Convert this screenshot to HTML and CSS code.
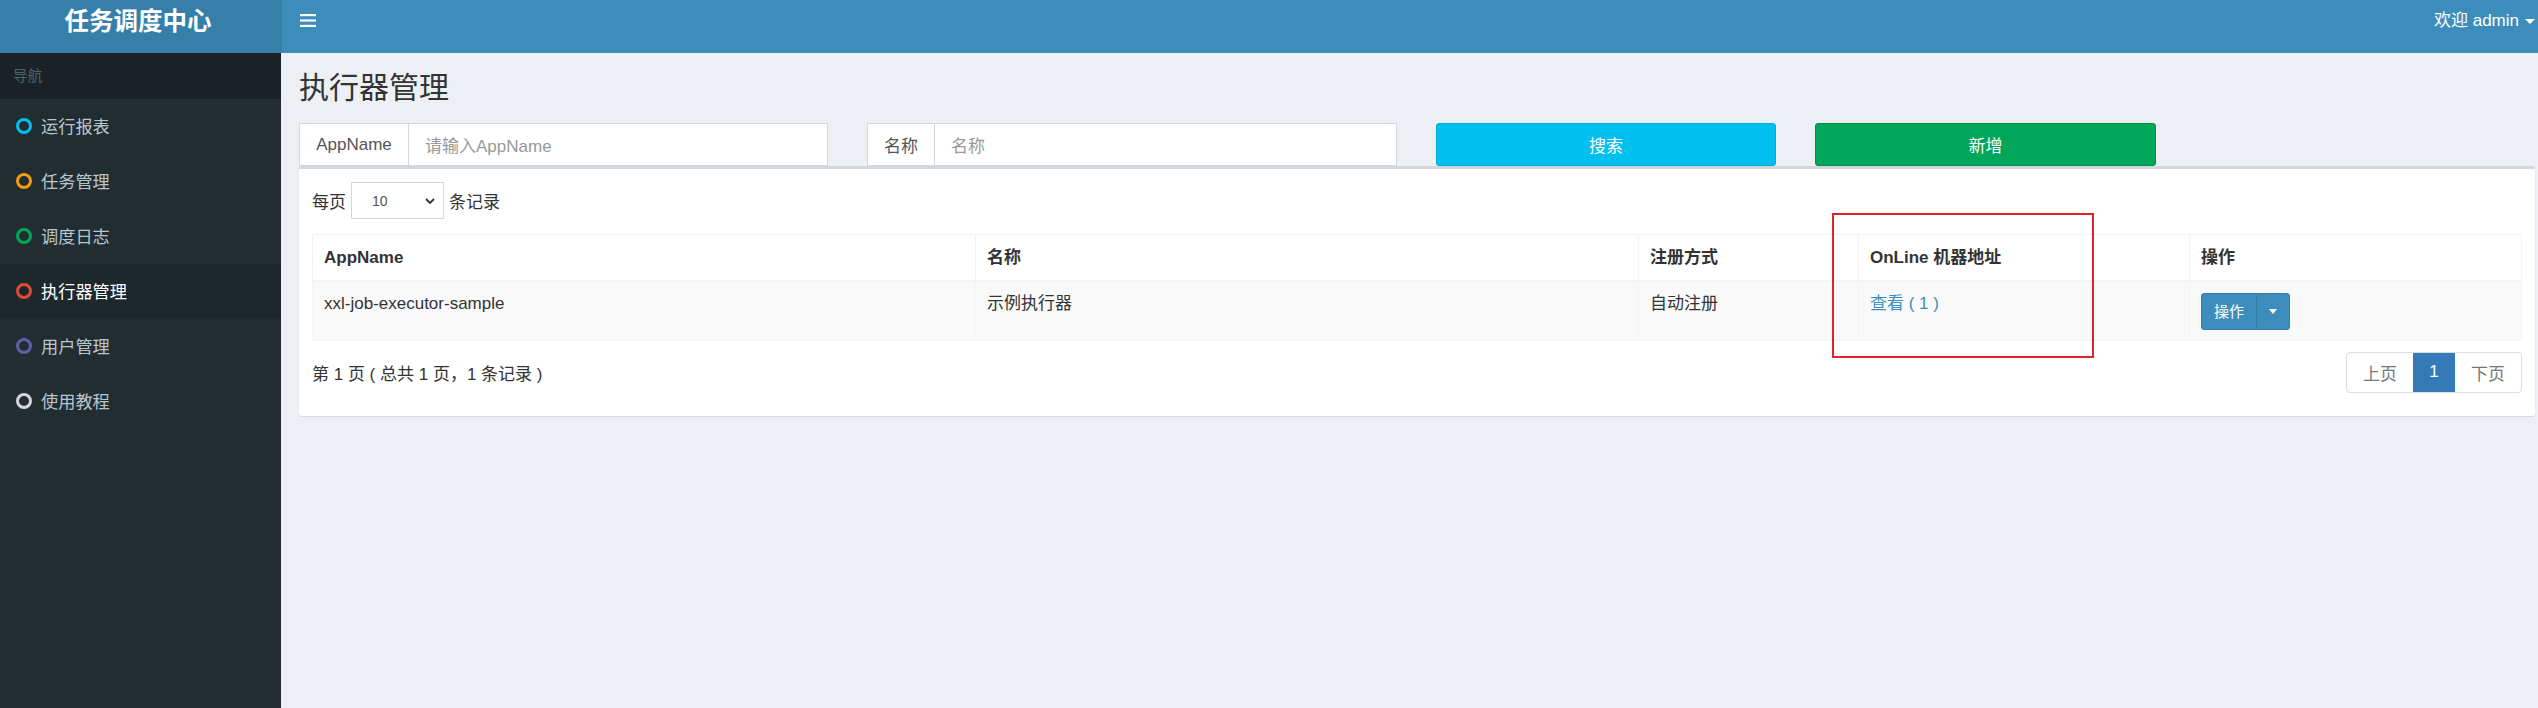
FILE: index.html
```html
<!DOCTYPE html>
<html lang="zh-CN">
<head>
<meta charset="utf-8">
<title>执行器管理</title>
<link rel="stylesheet" href="styles.css">
</head>
<body>
<div class="page">
  <header class="topbar">
    <div class="logo">任务调度中心</div>
    <div class="navbar">
      <span class="toggle">
        <svg width="16" height="14" viewBox="0 0 16 14"><rect x="0" y="0" width="16" height="2.2" fill="#fff"/><rect x="0" y="5.4" width="16" height="2.2" fill="#fff"/><rect x="0" y="10.8" width="16" height="2.2" fill="#fff"/></svg>
      </span>
      <span class="user">欢迎 admin <span class="caret"></span></span>
    </div>
  </header>
  <div class="main">
    <aside class="sidebar">
      <div class="nav-header">导航</div>
      <ul class="menu">
        <li class="item"><span class="ring ring-aqua"></span>运行报表</li>
        <li class="item"><span class="ring ring-yellow"></span>任务管理</li>
        <li class="item"><span class="ring ring-green"></span>调度日志</li>
        <li class="item active"><span class="ring ring-red"></span>执行器管理</li>
        <li class="item"><span class="ring ring-purple"></span>用户管理</li>
        <li class="item"><span class="ring ring-gray"></span>使用教程</li>
      </ul>
    </aside>
    <section class="content">
      <h1 class="title">执行器管理</h1>
      <div class="search-row">
        <div class="input-group">
          <span class="addon addon-app">AppName</span>
          <span class="field placeholder">请输入AppName</span>
        </div>
        <div class="input-group">
          <span class="addon addon-name">名称</span>
          <span class="field placeholder">名称</span>
        </div>
        <button class="btn btn-info">搜索</button>
        <button class="btn btn-success">新增</button>
      </div>
      <div class="box">
        <div class="length-row">
          <span>每页</span>
          <span class="select"><span>10</span>
            <svg width="10" height="6" viewBox="0 0 10 6"><path d="M1 1 L5 5 L9 1" fill="none" stroke="#333" stroke-width="1.8"/></svg>
          </span>
          <span>条记录</span>
        </div>
        <table class="grid">
          <colgroup>
            <col class="c1"><col class="c2"><col class="c3"><col class="c4"><col class="c5">
          </colgroup>
          <thead>
            <tr><th>AppName</th><th>名称</th><th>注册方式</th><th>OnLine 机器地址</th><th>操作</th></tr>
          </thead>
          <tbody>
            <tr>
              <td>xxl-job-executor-sample</td>
              <td>示例执行器</td>
              <td>自动注册</td>
              <td><a class="link">查看 ( 1 )</a></td>
              <td>
                <span class="btn-group">
                  <span class="op-main">操作</span>
                  <span class="op-caret"><span class="caret small"></span></span>
                </span>
              </td>
            </tr>
          </tbody>
        </table>
        <div class="footer-row">
          <span class="info">第 1 页 ( 总共 1 页，1 条记录 )</span>
          <ul class="pagination">
            <li class="pg">上页</li>
            <li class="pg current">1</li>
            <li class="pg">下页</li>
          </ul>
        </div>
      </div>
    </section>
  </div>
  <div class="annotation"></div>
</div>
</body>
</html>
```

FILE: styles.css
```css
* { box-sizing: border-box; }
html, body { margin: 0; padding: 0; }
body {
  font-family: "Liberation Sans", "Noto Sans CJK SC", sans-serif;
  font-size: 17px;
  color: #333;
  background: #ecf0f5;
}
.page { position: relative; width: 2538px; height: 708px; overflow: hidden; }

.topbar { display: flex; height: 53px; }
.logo {
  width: 282px; background: #367fa9; color: #fff;
  font-weight: bold; font-size: 24.5px; line-height: 43px;
  text-align: center; padding-right: 6px;
}
.navbar {
  flex: 1; background: #3c8dbc; display: flex;
  justify-content: space-between; align-items: flex-start;
  padding: 0 3px 0 18px;
}
.toggle { display: flex; padding-top: 14px; }
.user { color: #fff; font-size: 17px; line-height: 42px; display: flex; align-items: center; }
.caret {
  display: inline-block; width: 0; height: 0; margin-left: 6px;
  border-left: 5.5px solid transparent; border-right: 5.5px solid transparent;
  border-top: 5.5px solid #fff;
}
.caret.small { margin-left: 0; border-left-width: 4px; border-right-width: 4px; border-top-width: 5px; }

.main { display: flex; height: 655px; }
.sidebar { width: 282px; background: #222d32; }
.nav-header {
  height: 46px; line-height: 46px; background: #1a2226;
  color: #4b646f; font-size: 14.7px; padding-left: 13px;
}
.menu { list-style: none; margin: 0; padding: 0; }
.item {
  height: 55px; display: flex; align-items: center;
  padding: 0 0 2px 16px; color: #b8c7ce; font-size: 17.2px;
}
.item.active { background: #1e282c; color: #fff; }
.ring {
  width: 16px; height: 16px; border-radius: 50%;
  border: 3px solid #ccc; margin-right: 9px; flex: none;
}
.ring-aqua { border-color: #00c0ef; }
.ring-yellow { border-color: #f39c12; }
.ring-green { border-color: #00a65a; }
.ring-red { border-color: #dd4b39; }
.ring-purple { border-color: #605ca8; }
.ring-gray { border-color: #d2d6de; }

.content { flex: 1; padding: 17px 3px 0 18px; }
.title {
  margin: 0 0 17px; font-weight: normal; font-size: 30px;
  line-height: 36px; color: #333;
}
.search-row {
  display: grid; grid-template-columns: 529px 530px 340px 341px;
  column-gap: 39px; height: 43px;
}
.input-group { display: flex; border: 1px solid #d2d6de; background: #fff; }
.addon {
  display: flex; align-items: center; justify-content: center;
  color: #555; border-right: 1px solid #d2d6de; flex: none;
}
.addon-app { width: 109px; }
.addon-name { width: 67px; }
.field { flex: 1; display: flex; align-items: center; padding-left: 16px; }
.placeholder { color: #999; }
.btn {
  font-family: inherit; font-size: 17px; color: #fff;
  border-radius: 3px; border: 1px solid; cursor: pointer; height: 43px;
}
.btn-info { background: #00c0ef; border-color: #00acd6; }
.btn-success { background: #00a65a; border-color: #008d4c; }

.box {
  background: #fff; border-top: 3px solid #d2d6de; border-radius: 3px;
  box-shadow: 0 1px 1px rgba(0,0,0,0.1);
  padding: 13px 13px 23px;
}
.length-row { display: flex; align-items: center; height: 37px; gap: 5px; }
.select {
  width: 93px; height: 37px; border: 1px solid #d2d6de;
  display: flex; align-items: center; justify-content: space-between;
  padding: 0 8px 0 20px; color: #555; font-size: 14px;
}
.grid {
  width: 100%; margin-top: 15px; border-collapse: collapse;
  table-layout: fixed; border: 1px solid #f4f4f4;
}
.c1 { width: 663px; } .c2 { width: 663px; } .c3 { width: 220px; }
.c4 { width: 331px; } .c5 { width: 332px; }
.grid th, .grid td { border: 1px solid #f4f4f4; text-align: left; }
.grid thead tr { height: 46px; }
.grid th {
  font-weight: bold; padding: 0 11px; vertical-align: middle;
  border-bottom: 2px solid #f4f4f4; line-height: 21px;
}
.grid tbody tr { height: 59px; background: #f9f9f9; }
.grid td { padding: 11px 11px 10px; vertical-align: top; line-height: 21px; }
.link { color: #3c8dbc; }
.btn-group {
  display: inline-flex; height: 37px; background: #3c8dbc;
  border: 1px solid #367fa9; border-radius: 3px; color: #fff; font-size: 15px;
}
.op-main { width: 55px; display: flex; align-items: center; justify-content: center; border-right: 1px solid #367fa9; }
.op-caret { width: 32px; display: flex; align-items: center; justify-content: center; }

.footer-row {
  display: flex; justify-content: space-between; align-items: center;
  margin-top: 11px; height: 41px;
}
.pagination {
  list-style: none; margin: 0; padding: 0; display: flex;
  border: 1px solid #ddd; border-radius: 4px; overflow: hidden; height: 41px;
}
.pg { display: flex; align-items: center; justify-content: center; color: #777; width: 66px; }
.pg.current { width: 42px; background: #337ab7; color: #fff; }

.annotation {
  position: absolute; left: 1832px; top: 213px; width: 262px; height: 145px;
  border: 2px solid #e3212b;
}
```
